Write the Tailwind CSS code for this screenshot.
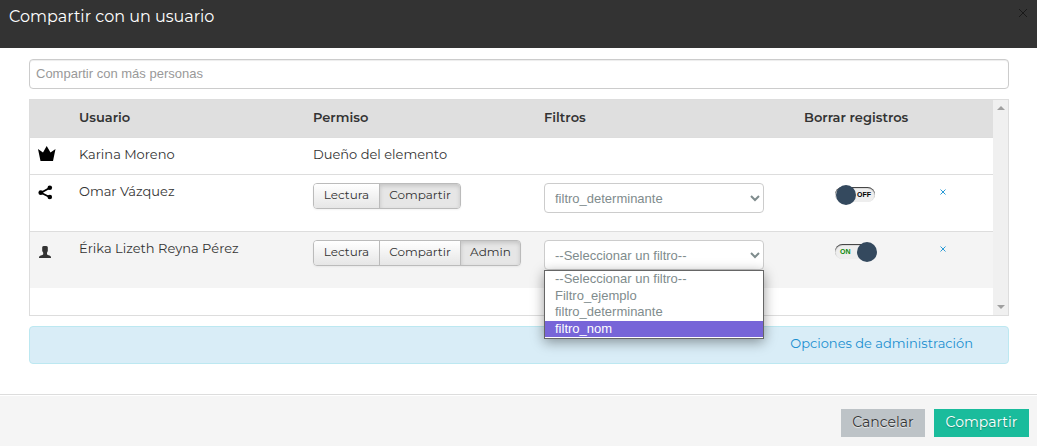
<!DOCTYPE html>
<html lang="es">
<head>
<meta charset="utf-8">
<meta name="viewport" content="width=device-width, initial-scale=1">
<title>Compartir con un usuario</title>
<script src="https://cdn.jsdelivr.net/npm/@tailwindcss/browser@4"></script>
</head>
<body class="flex min-h-screen flex-col bg-white font-['Montserrat','Inter',sans-serif] text-[13px] leading-5 text-[#333]">
  <header class="flex h-12 items-start justify-between bg-[#333] pt-[7px] pr-2 pl-[9px]">
    <h1 class="text-base leading-5 text-white">Compartir con un usuario</h1>
    <button type="button" aria-label="Cerrar" class="flex size-3 items-center justify-center">
      <svg class="size-2" viewBox="0 0 8 8" fill="none" stroke="#000" stroke-opacity=".5" stroke-width="1"><path d="M0 0L8 8M8 0L0 8"/></svg>
    </button>
  </header>

  <main class="flex flex-1 flex-col gap-2.5 pt-[11px] pr-7 pb-[30px] pl-[29px]">
    <input type="text" aria-label="Compartir con más personas" placeholder="Compartir con más personas" class="h-[30px] w-full shrink-0 rounded border border-[#ccc] bg-white px-1.5 pb-0.5 font-['Liberation_Sans',sans-serif] text-[13px] inset-shadow-[0_1px_1px_#00000013] placeholder:text-[#999]">

    <section class="flex h-[217px] border border-[#ddd]">
      <div class="min-w-0 flex-1">
        <table class="w-full table-fixed border-collapse text-left">
          <colgroup>
            <col class="w-[41px]"><col><col class="w-[231px]"><col class="w-[260px]"><col class="w-[135px]"><col class="w-[62px]">
          </colgroup>
          <thead>
            <tr class="h-[37px] bg-[#dfdfdf] align-top">
              <th></th>
              <th class="px-2 pt-[7px] font-semibold">Usuario</th>
              <th class="px-2 pt-[7px] font-semibold">Permiso</th>
              <th class="px-2 pt-[7px] font-semibold">Filtros</th>
              <th class="px-2 pt-[7px] font-semibold">Borrar registros</th>
              <th></th>
            </tr>
          </thead>
          <tbody>
            <tr class="h-[37px] border-t border-[#ddd] align-top">
              <td class="pt-[7px] pl-2">
                <svg class="h-4 w-[18px]" viewBox="0 0 18 16" fill="#000"><path d="M0 4L5 7.5L8.7 1L12.5 7.5L17.5 4L15 16H2.5Z"/></svg>
              </td>
              <td class="px-2 pt-1.5">Karina Moreno</td>
              <td class="px-2 pt-1.5">Dueño del elemento</td>
              <td></td><td></td><td></td>
            </tr>
            <tr class="h-[57px] border-t border-[#ddd] align-top">
              <td class="pt-2.5 pl-2">
                <svg class="size-4" viewBox="0 0 16 16"><path d="M11.5 3L3 7.7L11.5 12" fill="none" stroke="#000" stroke-width="1.8"/><circle cx="11.8" cy="2.8" r="2.3"/><circle cx="2.8" cy="7.7" r="2.4"/><circle cx="11.8" cy="12" r="2.3"/></svg>
              </td>
              <td class="px-2 pt-1.5">Omar Vázquez</td>
              <td class="px-2 pt-2">
                <div role="group" aria-label="Permiso de Omar Vázquez" class="inline-flex h-[26px] rounded border border-[#bbb] text-xs leading-5 shadow-[0_1px_2px_#0000000d]">
                  <button type="button" class="flex w-[65px] justify-center rounded-l-[3px] bg-linear-to-b from-white to-[#e6e6e6] pt-px">Lectura</button>
                  <button type="button" aria-pressed="true" class="flex w-[81px] justify-center rounded-r-[3px] border-l border-[#bbb] bg-[#e6e6e6] pt-px inset-shadow-[0_2px_4px_#00000026]">Compartir</button>
                </div>
              </td>
              <td class="px-2 pt-2">
                <select aria-label="Filtro de Omar Vázquez" class="block h-[30px] w-[220px] rounded border border-[#ccc] bg-white px-1.5 pt-0.5 font-['Liberation_Sans',sans-serif] text-[13px] text-[#7f8c8d]">
                  <option>--Seleccionar un filtro--</option>
                  <option>Filtro_ejemplo</option>
                  <option selected>filtro_determinante</option>
                  <option>filtro_nom</option>
                </select>
              </td>
              <td class="pt-3 pl-[39px]">
                <button type="button" role="switch" aria-checked="false" aria-label="Borrar registros de Omar Vázquez" class="relative flex h-[15px] w-10 items-center justify-end rounded-full bg-[#eee] pt-0.5 pr-1 font-['Liberation_Sans',sans-serif] text-[7px] leading-3 font-bold text-black inset-shadow-[0_1px_1px_#333]">OFF<span class="absolute -top-[2px] left-px size-5 rounded-full bg-[#34495e]"></span></button>
              </td>
              <td class="pt-[13px] pl-2">
                <button type="button" aria-label="Quitar a Omar Vázquez" class="block p-px"><svg class="size-1.5" viewBox="0 0 6 6" fill="none" stroke="#2b9bd6" stroke-width="1"><path d="M.5 .5L5.5 5.5M5.5 .5L.5 5.5"/></svg></button>
              </td>
            </tr>
            <tr class="h-[57px] border-t border-[#ddd] bg-[#f4f4f4] align-top">
              <td class="pt-[13px] pl-2">
                <svg class="size-4" viewBox="0 0 16 16" fill="#333"><path d="M4.2 2.2Q4.4 1 6 1H8Q9.6 1 9.8 2.2V6L9 7.8V9.2Q9.3 10 11.5 10.6Q13 11 13 12.3V13H1V12.3Q1 11 2.7 10.6Q5 10 5.2 9.2V7.8L4.2 6Z"/></svg>
              </td>
              <td class="px-2 pt-1.5">Érika Lizeth Reyna Pérez</td>
              <td class="px-2 pt-2">
                <div role="group" aria-label="Permiso de Érika Lizeth Reyna Pérez" class="inline-flex h-[26px] rounded border border-[#bbb] text-xs leading-5 shadow-[0_1px_2px_#0000000d]">
                  <button type="button" class="flex w-[65px] justify-center rounded-l-[3px] bg-linear-to-b from-white to-[#e6e6e6] pt-px">Lectura</button>
                  <button type="button" class="flex w-[81px] justify-center border-l border-[#bbb] bg-linear-to-b from-white to-[#e6e6e6] pt-px">Compartir</button>
                  <button type="button" aria-pressed="true" class="flex w-[60px] justify-center rounded-r-[3px] border-l border-[#bbb] bg-[#e6e6e6] pt-px inset-shadow-[0_2px_4px_#00000026]">Admin</button>
                </div>
              </td>
              <td class="px-2 pt-2">
                <div class="relative w-[220px]">
                  <select aria-label="Filtro de Érika Lizeth Reyna Pérez" class="block h-[30px] w-full rounded border border-[#ccc] bg-white px-1.5 pt-0.5 font-['Liberation_Sans',sans-serif] text-[13px] text-[#7f8c8d]">
                    <option>--Seleccionar un filtro--</option>
                    <option>Filtro_ejemplo</option>
                    <option>filtro_determinante</option>
                    <option>filtro_nom</option>
                  </select>
                  <ul role="listbox" aria-label="Filtros disponibles" class="absolute top-full left-0 z-10 w-full border border-[#666] bg-white pb-px font-['Liberation_Sans',sans-serif] text-[13px] text-[#7f8c8d] shadow-[0_3px_12px_#00000066]">
                    <li role="option" class="h-[17px] px-2.5 leading-4">--Seleccionar un filtro--</li>
                    <li role="option" class="h-4 px-2.5 leading-4">Filtro_ejemplo</li>
                    <li role="option" class="h-[17px] px-2.5 leading-4">filtro_determinante</li>
                    <li role="option" aria-selected="true" class="h-4 bg-[#7765d8] px-2.5 leading-4 text-white">filtro_nom</li>
                  </ul>
                </div>
              </td>
              <td class="pt-3 pl-[39px]">
                <button type="button" role="switch" aria-checked="true" aria-label="Borrar registros de Érika Lizeth Reyna Pérez" class="relative flex h-[15px] w-10 items-center rounded-full bg-[#eee] pt-0.5 pl-[5px] font-['Liberation_Sans',sans-serif] text-[7px] leading-3 font-bold text-[#0a8a0a] inset-shadow-[0_1px_1px_#333]">ON<span class="absolute -top-[2px] -right-[2px] size-5 rounded-full bg-[#34495e]"></span></button>
              </td>
              <td class="pt-[13px] pl-2">
                <button type="button" aria-label="Quitar a Érika Lizeth Reyna Pérez" class="block p-px"><svg class="size-1.5" viewBox="0 0 6 6" fill="none" stroke="#2b9bd6" stroke-width="1"><path d="M.5 .5L5.5 5.5M5.5 .5L.5 5.5"/></svg></button>
              </td>
            </tr>
          </tbody>
        </table>
      </div>
      <div aria-hidden="true" class="flex w-[15px] flex-col items-center justify-between bg-[#f0f0f0] py-1.5">
        <svg class="h-1 w-2" viewBox="0 0 8 4" fill="#a0a0a0"><path d="M0 4L4 0L8 4Z"/></svg>
        <svg class="h-1 w-2" viewBox="0 0 8 4" fill="#a0a0a0"><path d="M0 0L4 4L8 0Z"/></svg>
      </div>
    </section>

    <div class="flex h-[38px] items-start justify-end rounded border border-[#bce8f1] bg-[#d9edf7] pt-1.5 pr-[35px]">
      <a href="#" class="text-[13px] leading-5 text-[#1a8fd0]">Opciones de administración</a>
    </div>
  </main>

  <footer class="flex h-[52px] justify-end gap-[9px] border-t border-[#ddd] bg-[#f5f5f5] pt-3.5 pr-2 inset-shadow-[0_1px_0_#fff]">
    <button type="button" class="flex h-7 w-[84px] items-start justify-center bg-[#bdc3c7] pt-[3px] text-sm leading-5 text-[#333] text-shadow-[0_1px_1px_#ffffffbf]">Cancelar</button>
    <button type="button" class="flex h-7 w-[95px] items-start justify-center bg-[#1abc9c] pt-[3px] text-sm leading-5 text-white text-shadow-[0_1px_1px_#00000040]">Compartir</button>
  </footer>
</body>
</html>
